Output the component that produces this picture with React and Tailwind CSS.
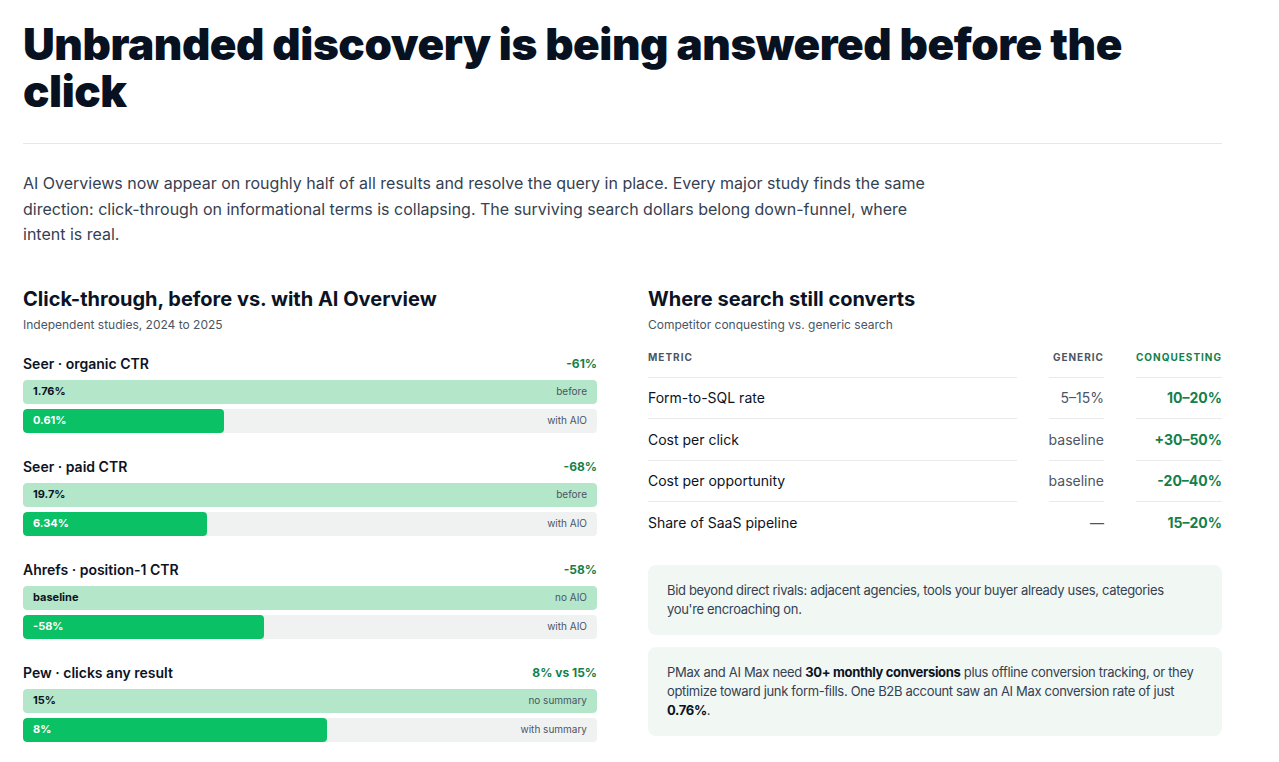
const STUDIES = [
  {
    name: 'Seer · organic CTR',
    delta: '-61%',
    top: { value: '1.76%', label: 'before', pct: 100 },
    bottom: { value: '0.61%', label: 'with AIO', pct: 35 },
  },
  {
    name: 'Seer · paid CTR',
    delta: '-68%',
    top: { value: '19.7%', label: 'before', pct: 100 },
    bottom: { value: '6.34%', label: 'with AIO', pct: 32 },
  },
  {
    name: 'Ahrefs · position-1 CTR',
    delta: '-58%',
    top: { value: 'baseline', label: 'no AIO', pct: 100 },
    bottom: { value: '-58%', label: 'with AIO', pct: 42 },
  },
  {
    name: 'Pew · clicks any result',
    delta: '8% vs 15%',
    top: { value: '15%', label: 'no summary', pct: 100 },
    bottom: { value: '8%', label: 'with summary', pct: 53 },
  },
]

const ROWS = [
  ['Form-to-SQL rate', '5–15%', '10–20%'],
  ['Cost per click', 'baseline', '+30–50%'],
  ['Cost per opportunity', 'baseline', '-20–40%'],
  ['Share of SaaS pipeline', '—', '15–20%'],
]

function Bar({ value, label, pct, strong }) {
  return (
    <div className="relative h-6 rounded-[4px] bg-[#f0f2f1] overflow-hidden">
      <div
        className={`absolute inset-y-0 left-0 rounded-[4px] ${strong ? 'bg-[#0ac165]' : 'bg-[#b4e6ca]'}`}
        style={{ width: `${pct}%` }}
      />
      <div className="relative h-full flex items-center justify-between px-[10px]">
        <span className={`text-[11px] font-bold ${strong ? 'text-white' : 'text-[#0b1324]'}`}>{value}</span>
        <span className="text-[10px] text-[#4b5565]">{label}</span>
      </div>
    </div>
  )
}

export default function App() {
  return (
    <div className="bg-white min-h-[762px] px-[23px] pt-[21px] font-['Inter',sans-serif] text-[#0b1324]">
      <div className="w-[1199px]">
        <h1 className="text-[44px] leading-[47px] font-black tracking-[-0.01em] text-[#07111f]">
          Unbranded discovery is being answered before the click
        </h1>
        <div className="mt-[28px] border-t border-[#e5e7ea]" />
        <p className="mt-[27px] max-w-[930px] text-[16px] leading-[25.5px] text-[#354152]">
          AI Overviews now appear on roughly half of all results and resolve the query in place. Every major study finds the same direction: click-through on informational terms is collapsing. The surviving search dollars belong down-funnel, where intent is real.
        </p>

        <div className="mt-[38px] grid grid-cols-2 gap-x-[51px]">
          <section>
            <h2 className="text-[20px] leading-[26px] font-bold">Click-through, before vs. with AI Overview</h2>
            <p className="mt-[4px] text-[12px] text-[#4b5565]">Independent studies, 2024 to 2025</p>
            <div className="mt-[20px] flex flex-col gap-[24px]">
              {STUDIES.map(s => (
                <div key={s.name}>
                  <div className="flex items-center justify-between h-[20px]">
                    <span className="text-[14px] font-semibold">{s.name}</span>
                    <span className="text-[12px] font-bold text-[#13804a]">{s.delta}</span>
                  </div>
                  <div className="mt-[6px] flex flex-col gap-[5px]">
                    <Bar {...s.top} />
                    <Bar {...s.bottom} strong />
                  </div>
                </div>
              ))}
            </div>
          </section>

          <section>
            <h2 className="text-[20px] leading-[26px] font-bold">Where search still converts</h2>
            <p className="mt-[4px] text-[12px] text-[#4b5565]">Competitor conquesting vs. generic search</p>
            <div className="mt-[16px] grid grid-cols-[1fr_auto_auto] gap-x-[32px]">
              <div className="pb-[12px] leading-[15px] text-[10px] font-bold tracking-[0.1em] text-[#4b5565] border-b border-[#e8eaec]">METRIC</div>
              <div className="pb-[12px] leading-[15px] text-right text-[10px] font-bold tracking-[0.1em] text-[#4b5565] border-b border-[#e8eaec]">GENERIC</div>
              <div className="pb-[12px] leading-[15px] text-right text-[10px] font-bold tracking-[0.1em] text-[#13804a] border-b border-[#e8eaec]">CONQUESTING</div>
              {ROWS.map((r, i) => {
                const line = i < ROWS.length - 1 ? 'border-b border-[#e8eaec]' : ''
                return [
                  <div key={r[0] + 'a'} className={`h-[41.5px] flex items-center text-[14px] text-[#0b1324] ${line}`}>{r[0]}</div>,
                  <div key={r[0] + 'b'} className={`h-[41.5px] flex items-center justify-end text-[14px] text-[#4b5565] ${line}`}>{r[1]}</div>,
                  <div key={r[0] + 'c'} className={`h-[41.5px] flex items-center justify-end text-[14px] font-bold text-[#13804a] ${line}`}>{r[2]}</div>,
                ]
              })}
            </div>

            <div className="mt-[21px] flex flex-col gap-[12px]">
              <div className="rounded-[8px] bg-[#f1f8f3] px-[19px] py-[16px] text-[13px] leading-[19px] tracking-[-0.025em] text-[#354152]">
                Bid beyond direct rivals: adjacent agencies, tools your buyer already uses, categories you're encroaching on.
              </div>
              <div className="rounded-[8px] bg-[#f1f8f3] px-[19px] py-[16px] text-[13px] leading-[19px] tracking-[-0.025em] text-[#354152]">
                PMax and AI Max need <b className="font-bold text-[#0b1324]">30+ monthly conversions</b> plus offline conversion tracking, or they optimize toward junk form-fills. One B2B account saw an AI Max conversion rate of just <b className="font-bold text-[#0b1324]">0.76%</b>.
              </div>
            </div>
          </section>
        </div>
      </div>
    </div>
  )
}
